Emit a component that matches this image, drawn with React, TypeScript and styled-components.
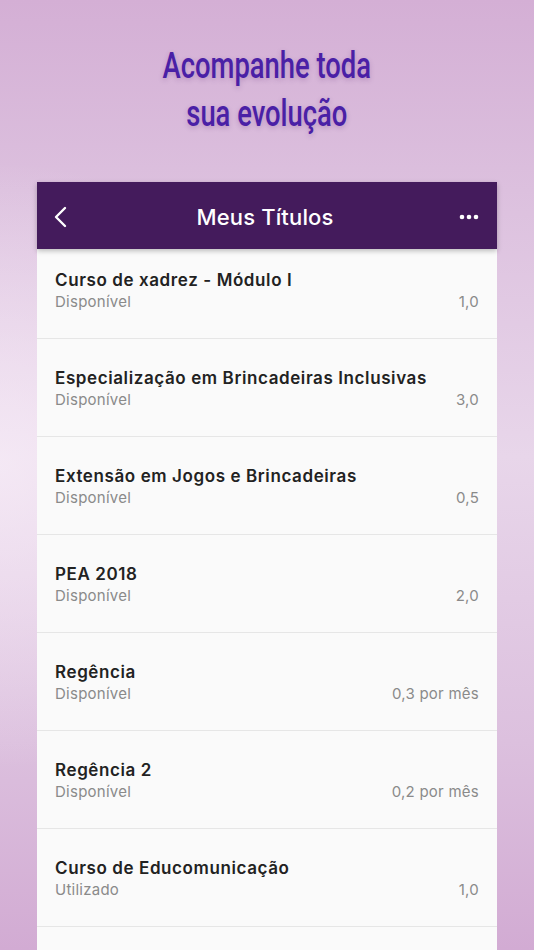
import React from "react";
import styled, { createGlobalStyle } from "styled-components";

const GlobalStyle = createGlobalStyle`
  html, body {
    margin: 0;
    padding: 0;
    height: 100%;
  }
  body {
    overflow: hidden;
    background:
      radial-gradient(ellipse 60% 32% at 0% 49%, rgba(248, 238, 248, 0.75) 0%, rgba(248, 238, 248, 0) 100%),
      linear-gradient(180deg, #d4afd5 0%, #dcc0de 20%, #e8d6ea 48%, #dcc0de 78%, #d2abd3 100%);
    font-family: Inter, Roboto, "Noto Sans", sans-serif;
  }
`;

const titulos = [
  { nome: "Curso de xadrez - Módulo I", status: "Disponível", valor: "1,0" },
  { nome: "Especialização em Brincadeiras Inclusivas", status: "Disponível", valor: "3,0" },
  { nome: "Extensão em Jogos e Brincadeiras", status: "Disponível", valor: "0,5" },
  { nome: "PEA 2018", status: "Disponível", valor: "2,0" },
  { nome: "Regência", status: "Disponível", valor: "0,3 por mês" },
  { nome: "Regência 2", status: "Disponível", valor: "0,2 por mês" },
  { nome: "Curso de Educomunicação", status: "Utilizado", valor: "1,0" },
];

const App = () => {
  return (
    <Page>
      <GlobalStyle />
      <Headline>
        <HeadlineLine>Acompanhe toda</HeadlineLine>
        <HeadlineLine>sua evolução</HeadlineLine>
      </Headline>
      <Card>
        <TopBar>
          <IconButton aria-label="voltar">
            <svg width="16" height="24" viewBox="0 0 16 24">
              <path d="M12 3 L3 12 L12 21" fill="none" stroke="#fff" strokeWidth="2.4" strokeLinecap="round" strokeLinejoin="round" />
            </svg>
          </IconButton>
          <BarTitle>Meus Títulos</BarTitle>
          <IconButton aria-label="mais">
            <svg width="20" height="6" viewBox="0 0 20 6">
              <circle cx="3" cy="3" r="2.3" fill="#fff" />
              <circle cx="10" cy="3" r="2.3" fill="#fff" />
              <circle cx="17" cy="3" r="2.3" fill="#fff" />
            </svg>
          </IconButton>
        </TopBar>
        <List>
          {titulos.map((t, i) => (
            <Row key={t.nome} first={i === 0}>
              <RowTitle>{t.nome}</RowTitle>
              <RowInfo>
                <span>{t.status}</span>
                <span>{t.valor}</span>
              </RowInfo>
            </Row>
          ))}
        </List>
      </Card>
    </Page>
  );
};

export default App;

const Page = styled.div`
  height: 950px;
  overflow: hidden;
  display: flex;
  flex-direction: column;
  align-items: center;
  padding-top: 42px;
  box-sizing: border-box;
`;

const Headline = styled.h1`
  margin: 0 0 44px;
  display: flex;
  flex-direction: column;
  align-items: center;
  font-family: Roboto, "Liberation Sans", sans-serif;
  font-weight: 500;
  font-size: 37px;
  line-height: 48px;
  color: #4a20a6;
  text-shadow: 0 2px 6px rgba(90, 40, 120, 0.25);
`;

/* no condensed face installed: narrow the line by hand */
const HeadlineLine = styled.span`
  display: block;
  white-space: nowrap;
  transform: scaleX(0.74);
`;

const Card = styled.div`
  width: 460px;
  flex: 1;
  background: #fafafa;
  display: flex;
  flex-direction: column;
`;

const TopBar = styled.div`
  height: 67px;
  box-sizing: border-box;
  background: #441b5c;
  display: flex;
  align-items: center;
  justify-content: space-between;
  padding: 3px 16px 0 12px;
  box-shadow: 0 2px 5px rgba(0, 0, 0, 0.25);
  position: relative;
  z-index: 1;
`;

const IconButton = styled.div`
  width: 24px;
  height: 24px;
  display: flex;
  align-items: center;
  justify-content: center;
`;

const BarTitle = styled.div`
  color: #fff;
  font-size: 22px;
  font-weight: 500;
  letter-spacing: 0.15px;
`;

const List = styled.div`
  display: flex;
  flex-direction: column;
`;

const Row = styled.div<{ first?: boolean }>`
  padding: ${(p) => (p.first ? "20px" : "28px")} 18px 25px;
  border-bottom: 1px solid #e6e6e6;
`;

const RowTitle = styled.div`
  font-size: 17px;
  font-weight: 600;
  line-height: 22px;
  letter-spacing: 0.6px;
  color: #222;
`;

const RowInfo = styled.div`
  display: flex;
  justify-content: space-between;
  font-size: 15px;
  line-height: 22px;
  letter-spacing: 0.25px;
  color: #8a8a8a;
`;
